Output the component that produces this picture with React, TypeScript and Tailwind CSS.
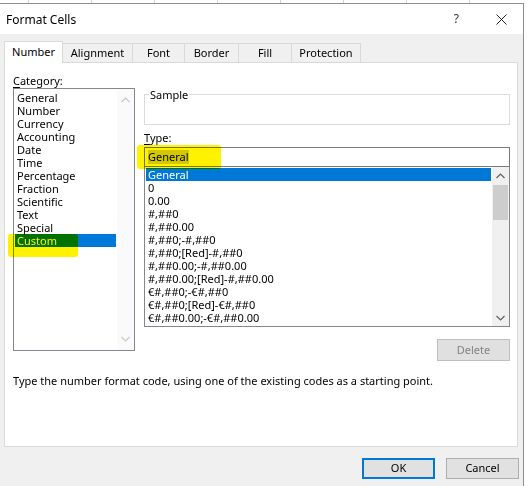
import React from "react";

const categories = [
  "General",
  "Number",
  "Currency",
  "Accounting",
  "Date",
  "Time",
  "Percentage",
  "Fraction",
  "Scientific",
  "Text",
  "Special",
  "Custom",
];

const formats = [
  "General",
  "0",
  "0.00",
  "#,##0",
  "#,##0.00",
  "#,##0;-#,##0",
  "#,##0;[Red]-#,##0",
  "#,##0.00;-#,##0.00",
  "#,##0.00;[Red]-#,##0.00",
  "€#,##0;-€#,##0",
  "€#,##0;[Red]-€#,##0",
  "€#,##0.00;-€#,##0.00",
];

const tabs = [
  { label: "Number", w: "w-[59px]" },
  { label: "Alignment", w: "w-[70px]" },
  { label: "Font", w: "w-[52px]" },
  { label: "Border", w: "w-[54px]" },
  { label: "Fill", w: "w-[53px]" },
  { label: "Protection", w: "w-[69px]" },
];

function Chevron({ up, color }: { up?: boolean; color: string }) {
  return (
    <svg width="9" height="6" viewBox="0 0 9 6">
      <polyline
        points={up ? "0.5,5 4.5,1 8.5,5" : "0.5,1 4.5,5 8.5,1"}
        fill="none"
        stroke={color}
        strokeWidth="1.2"
      />
    </svg>
  );
}

export default function App() {
  return (
    <div className="relative w-[528px] h-[486px] overflow-hidden bg-white text-[11px] text-black font-['Segoe_UI','Noto_Sans',sans-serif]">
      {/* hoja de cálculo detrás */}
      <div className="flex h-[3px]">
        <div className="w-[29px] border-r border-[#d4d4d4]" />
        {[0, 1, 2, 3, 4, 5, 6].map((i) => (
          <div key={i} className="w-[63px] border-r border-[#d4d4d4]" />
        ))}
      </div>

      {/* diálogo */}
      <div className="flex flex-col w-[524px] h-[483px] border-t border-r border-[#8f8f8f]">
        {/* barra de título */}
        <div className="flex items-center h-[30px] bg-white">
          <span className="ml-[6px] mt-[1px] text-[12px]">Format Cells</span>
          <span className="ml-auto mr-[37px] text-[12px] text-[#333]">?</span>
          <svg width="11" height="11" viewBox="0 0 11 11" className="mr-[16px]">
            <path d="M0.5 0.5 L10.5 10.5 M10.5 0.5 L0.5 10.5" stroke="#222" strokeWidth="1" />
          </svg>
        </div>

        <div className="flex-1 bg-[#f0f0f0] pt-[7px] pl-[4px] pr-[4px]">
          {/* pestañas */}
          <div className="flex items-end h-[21px]">
            {tabs.map((t, i) =>
              i === 0 ? (
                <div
                  key={t.label}
                  className={`${t.w} relative z-10 -mb-px h-[22px] flex items-center justify-center bg-white border-l border-t border-r border-[#d9d9d9]`}
                >
                  {t.label}
                </div>
              ) : (
                <div
                  key={t.label}
                  className={`${t.w} h-[19px] flex items-center justify-center border-t border-r border-[#d9d9d9] pt-[1px]`}
                >
                  {t.label}
                </div>
              )
            )}
          </div>

          {/* panel */}
          <div className="relative mr-[1px] h-[385px] bg-white border border-[#d9d9d9]">
            <div className="flex pt-[10px]">
              {/* categorías */}
              <div className="ml-[8px] w-[122px]">
                <div className="h-[15px] leading-[15px]">
                  <u className="underline-offset-2">C</u>ategory:
                </div>
                <div className="flex h-[263px] border border-[#828790] bg-white">
                  <div className="flex-1 pt-[2px] px-[1px]">
                    {categories.map((c) => (
                      <div
                        key={c}
                        className={`h-[13px] leading-[13px] pl-[2px] ${
                          c === "Custom" ? "bg-[#0078d7] text-white" : ""
                        }`}
                      >
                        {c}
                      </div>
                    ))}
                  </div>
                  <div className="w-[17px] flex flex-col items-center justify-between py-[8px] bg-[#fafafa]">
                    <Chevron up color="#c8c8c8" />
                    <Chevron color="#c8c8c8" />
                  </div>
                </div>
              </div>

              {/* lado derecho */}
              <div className="ml-[9px] w-[366px]">
                <div className="relative mt-[21px] h-[31px] border border-[#dcdcdc]">
                  <span className="absolute -top-[8px] left-[4px] bg-white px-[1px] leading-[15px]">
                    Sample
                  </span>
                </div>
                <div className="mt-[5px] h-[15px] leading-[15px]">
                  <u className="underline-offset-2">T</u>ype:
                </div>
                <div className="mt-[2px] h-[20px] flex items-center border border-[#7a7a7a] pl-[3px]">
                  <span className="bg-[#d2d2d2] leading-[14px]">General</span>
                </div>
                <div className="flex h-[160px] border border-[#828790] border-t-0">
                  <div className="flex-1 p-[1px] overflow-hidden">
                    {formats.map((f, i) => (
                      <div
                        key={f}
                        className={`h-[13px] leading-[13px] pl-[2px] ${
                          i === 0 ? "bg-[#0078d7] text-white" : ""
                        }`}
                      >
                        {f}
                      </div>
                    ))}
                  </div>
                  <div className="w-[17px] flex flex-col bg-[#f0f0f0]">
                    <div className="h-[17px] flex items-center justify-center">
                      <Chevron up color="#606060" />
                    </div>
                    <div className="mx-[1px] mt-[1px] h-[35px] bg-[#cdcdcd]" />
                    <div className="mt-auto h-[17px] flex items-center justify-center">
                      <Chevron color="#606060" />
                    </div>
                  </div>
                </div>
                <div className="flex justify-end mt-[12px]">
                  <div className="w-[73px] h-[22px] flex items-center justify-center bg-[#e0e0e0] border border-[#bfbfbf] text-[#838383]">
                    Delete
                  </div>
                </div>
              </div>
            </div>

            <div className="ml-[8px] mt-[12px] leading-[15px]">
              Type the number format code, using one of the existing codes as a starting point.
            </div>

            {/* marcas de resaltador */}
            <div className="absolute left-[3px] top-[171px] w-[70px] h-[23px] rounded-[3px] bg-[#fff200] mix-blend-multiply" />
            <div className="absolute left-[132px] top-[82px] w-[84px] h-[24px] rounded-[3px] bg-[#fff200] mix-blend-multiply" />
          </div>

          {/* botones */}
          <div className="flex justify-end gap-[11px] mt-[11px]">
            <div className="w-[73px] h-[21px] flex items-center justify-center bg-[#e1e1e1] border-2 border-[#0078d7]">
              OK
            </div>
            <div className="w-[73px] h-[21px] flex items-center justify-center bg-[#e1e1e1] border border-[#adadad]">
              Cancel
            </div>
          </div>
        </div>
      </div>
    </div>
  );
}
